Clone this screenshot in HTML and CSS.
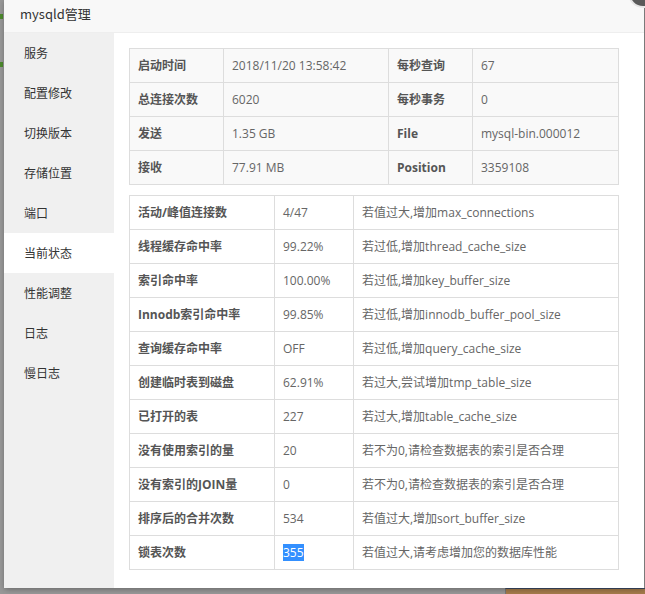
FILE: index.html
```html
<!DOCTYPE html>
<html lang="zh-CN">
<head>
<meta charset="utf-8">
<title>mysqld管理</title>
<link rel="stylesheet" href="styles.css">
</head>
<body>
<div class="backdrop-strip"></div>
<div class="backdrop-dots"><i class="dot dot-a"></i><i class="dot dot-b"></i></div>
<div class="dialog">
  <div class="dialog-title">mysqld管理</div>
  <span class="dialog-close"></span>
  <div class="dialog-body">
    <ul class="menu">
      <li>服务</li>
      <li>配置修改</li>
      <li>切换版本</li>
      <li>存储位置</li>
      <li>端口</li>
      <li class="active">当前状态</li>
      <li>性能调整</li>
      <li>日志</li>
      <li>慢日志</li>
    </ul>
    <div class="content">
      <table class="tbl info">
        <colgroup><col class="c1"><col class="c2"><col class="c3"><col class="c4"></colgroup>
        <tr><td class="label">启动时间</td><td>2018/11/20 13:58:42</td><td class="label">每秒查询</td><td>67</td></tr>
        <tr><td class="label">总连接次数</td><td>6020</td><td class="label">每秒事务</td><td>0</td></tr>
        <tr><td class="label">发送</td><td>1.35 GB</td><td class="label">File</td><td>mysql-bin.000012</td></tr>
        <tr><td class="label">接收</td><td>77.91 MB</td><td class="label">Position</td><td>3359108</td></tr>
      </table>
      <table class="tbl status">
        <colgroup><col class="s1"><col class="s2"><col class="s3"></colgroup>
        <tr><td class="label">活动/峰值连接数</td><td>4/47</td><td>若值过大,增加max_connections</td></tr>
        <tr><td class="label">线程缓存命中率</td><td>99.22%</td><td>若过低,增加thread_cache_size</td></tr>
        <tr><td class="label">索引命中率</td><td>100.00%</td><td>若过低,增加key_buffer_size</td></tr>
        <tr><td class="label">Innodb索引命中率</td><td>99.85%</td><td>若过低,增加innodb_buffer_pool_size</td></tr>
        <tr><td class="label">查询缓存命中率</td><td>OFF</td><td>若过低,增加query_cache_size</td></tr>
        <tr><td class="label">创建临时表到磁盘</td><td>62.91%</td><td>若过大,尝试增加tmp_table_size</td></tr>
        <tr><td class="label">已打开的表</td><td>227</td><td>若过大,增加table_cache_size</td></tr>
        <tr><td class="label">没有使用索引的量</td><td>20</td><td>若不为0,请检查数据表的索引是否合理</td></tr>
        <tr><td class="label">没有索引的JOIN量</td><td>0</td><td>若不为0,请检查数据表的索引是否合理</td></tr>
        <tr><td class="label">排序后的合并次数</td><td>534</td><td>若值过大,增加sort_buffer_size</td></tr>
        <tr><td class="label">锁表次数</td><td><span class="selected">355</span></td><td>若值过大,请考虑增加您的数据库性能</td></tr>
      </table>
    </div>
  </div>
</div>
</body>
</html>
```

FILE: styles.css
```css
html, body {
  margin: 0;
  padding: 0;
}

body {
  position: relative;
  width: 645px;
  height: 594px;
  overflow: hidden;
  background: #989898;
  font-family: "Open Sans", "Noto Sans CJK SC", sans-serif;
}

.backdrop-strip {
  position: absolute;
  left: 505px;
  top: 588px;
  width: 140px;
  height: 6px;
  background: #a57b4b;
  border-top: 1px solid #3d4b66;
  border-left: 1px solid #777;
}

.backdrop-dots .dot {
  position: absolute;
  left: 0;
  width: 3px;
  height: 5px;
  background: #4d8a2e;
}

.backdrop-dots .dot-a { top: 14px; }
.backdrop-dots .dot-b { top: 62px; }

.dialog {
  position: absolute;
  left: 4px;
  top: 0;
  width: 640px;
  height: 588px;
  background: #fff;
  box-shadow: 1px 1px 6px rgba(0, 0, 0, 0.35);
  display: flex;
  flex-direction: column;
}

.dialog-title {
  height: 32px;
  line-height: 28px;
  padding-left: 16px;
  background: #f8f8f8;
  border-bottom: 1px solid #eee;
  font-family: "Noto Sans CJK SC", sans-serif;
  font-size: 13px;
  color: #333;
}

.dialog-close {
  position: absolute;
  right: -14px;
  top: -22px;
  width: 26px;
  height: 26px;
  border-radius: 50%;
  background: #5a5a5a;
  border: 2px solid #e6e6e6;
}

.dialog-body {
  flex: 1;
  display: flex;
  min-height: 0;
}

.menu {
  width: 110px;
  margin: 0;
  padding: 0;
  list-style: none;
  background: #f0f0f0;
}

.menu li {
  height: 40px;
  line-height: 40px;
  padding-left: 20px;
  font-family: "Noto Sans CJK SC", sans-serif;
  font-size: 12px;
  color: #333;
}

.menu li.active {
  background: #fff;
}

.content {
  flex: 1;
  padding: 15px 0 0 15px;
}

.tbl {
  border-collapse: collapse;
  width: 489px;
  table-layout: fixed;
  font-size: 12px;
  color: #666;
}

.tbl td {
  border: 1px solid #ddd;
  height: 33px;
  padding: 0 8px;
  line-height: 18px;
  white-space: nowrap;
}

.info td {
  background: #f9f9f9;
}

.tbl td.label {
  font-weight: bold;
  color: #555;
}

.c1 { width: 94px; }
.c2 { width: 165px; }
.c3 { width: 84px; }
.c4 { width: 146px; }

.status {
  margin-top: 10px;
}

.s1 { width: 145px; }
.s2 { width: 79px; }
.s3 { width: 265px; }

.selected {
  background: #3390ff;
  color: #fff;
}
```
